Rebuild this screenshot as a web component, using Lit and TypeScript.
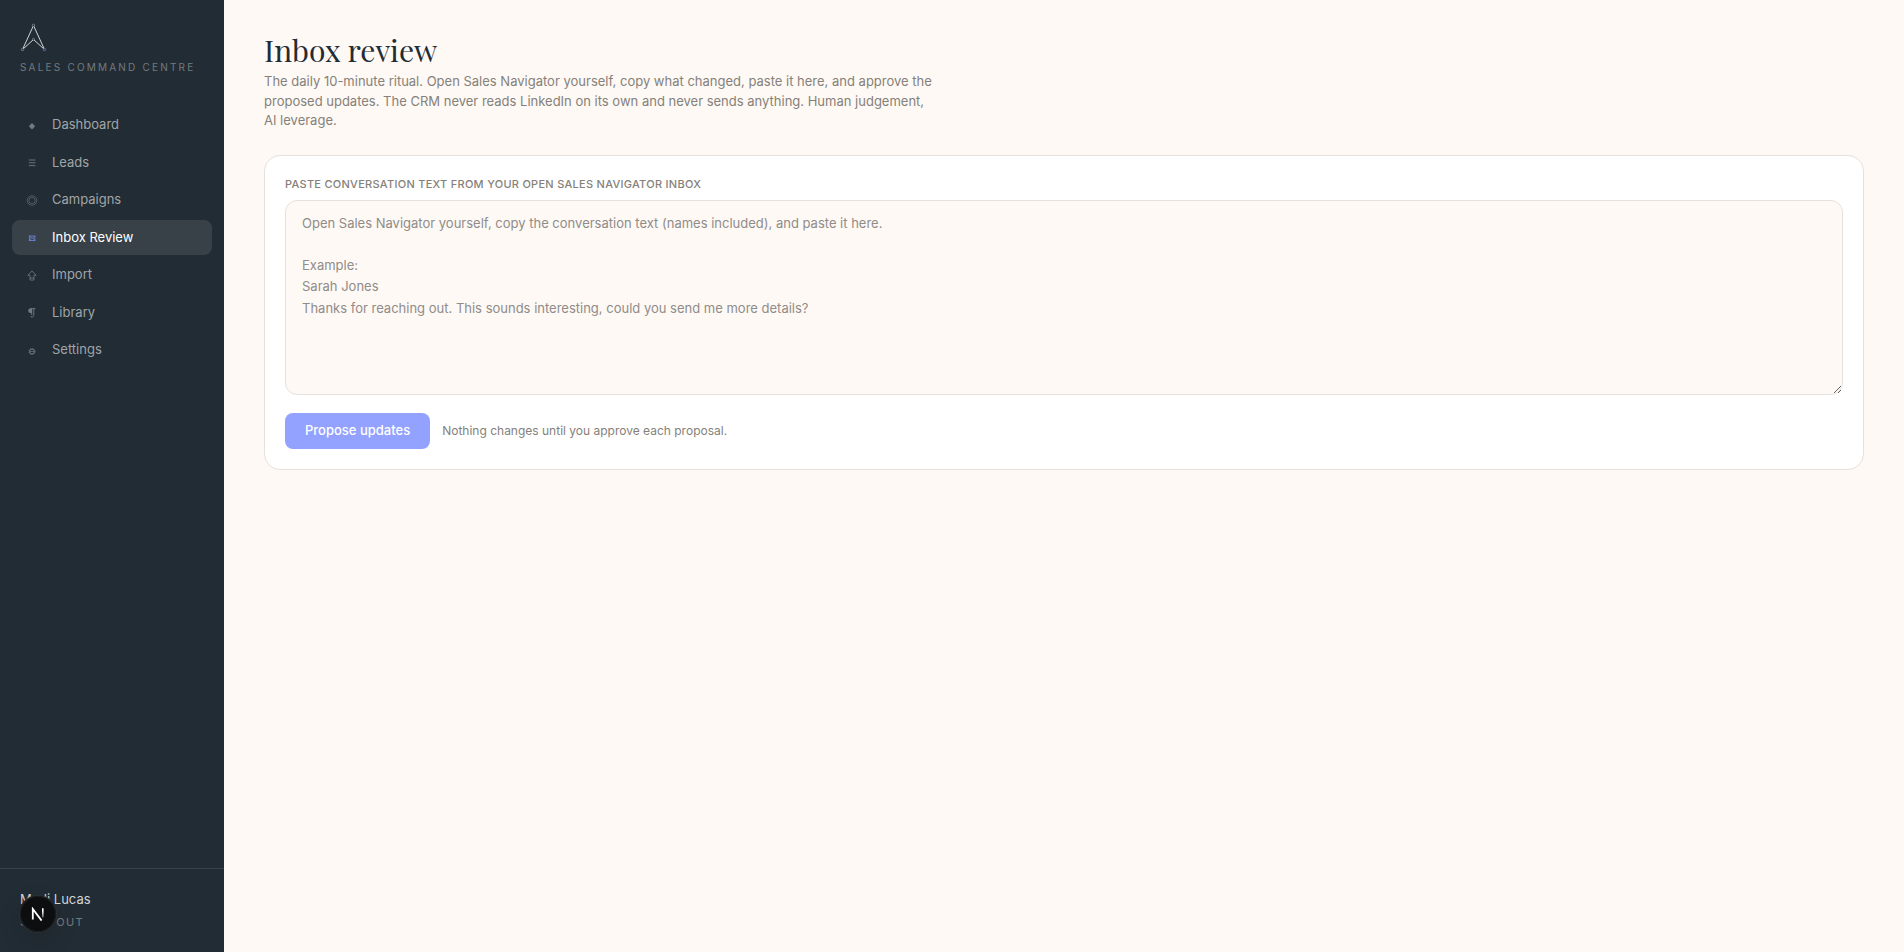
import { LitElement, html, css, svg } from "lit";
import { customElement, state } from "lit/decorators.js";
import { classMap } from "lit/directives/class-map.js";

const icons = {
  dashboard: svg`<path d="M8 6 11.2 9.2 8 12.4 4.8 9.2Z" fill="currentColor"/>`,
  leads: svg`<path d="M4.8 6h6.6M4.8 8.8h6.6M4.8 11.6h6.6" stroke="currentColor" stroke-width=".9"/>`,
  campaigns: svg`<circle cx="8" cy="8.5" r="4.8" stroke="currentColor" stroke-width=".6" fill="none"/><circle cx="8" cy="8.5" r="3.1" stroke="currentColor" stroke-width=".6" fill="none"/>`,
  inbox: svg`<rect x="5.3" y="7" width="5.6" height="4.6" stroke="currentColor" stroke-width=".8" fill="none"/><path d="m5.3 7 2.8 2.4L10.9 7M5.3 11.6l2-2.4M10.9 11.6l-2-2.4" stroke="currentColor" stroke-width=".8" fill="none"/>`,
  import: svg`<path d="M8 4 12.2 8.3H10V13H6V8.3H3.8ZM6 11h4" stroke="currentColor" stroke-width=".8" fill="none"/>`,
  library: svg`<path d="M8 4.3H6.6a2.2 2.2 0 0 0 0 4.8H8Z" fill="currentColor"/><path d="M7 4.6h4.5M7.7 4.5V11M9.8 4.5v6.6c0 1.3-.7 2-1.8 2-.8 0-1.3-.3-1.6-.9" stroke="currentColor" stroke-width=".9" fill="none"/>`,
  settings: svg`<circle cx="8" cy="9.5" r="2.5" stroke="currentColor" fill="none"/><circle cx="8" cy="9.5" r="3.1" stroke="currentColor" stroke-width=".7" stroke-dasharray="1 1" fill="none"/><path d="M6 9.5h4" stroke="currentColor" stroke-width=".7"/>`,
};

const items: { label: string; icon: keyof typeof icons }[] = [
  { label: "Dashboard", icon: "dashboard" },
  { label: "Leads", icon: "leads" },
  { label: "Campaigns", icon: "campaigns" },
  { label: "Inbox Review", icon: "inbox" },
  { label: "Import", icon: "import" },
  { label: "Library", icon: "library" },
  { label: "Settings", icon: "settings" },
];

@customElement("app-sidebar")
class AppSidebar extends LitElement {
  static styles = css`
    :host { display: flex; flex-direction: column; background: #222c34; color: #fff; }
    .brand { padding: 20px 20px 0; }
    .logo { display: block; width: 28px; height: 36px; }
    .tagline { margin: 4px 0 0; font-size: 10px; line-height: 15px; letter-spacing: 0.22em; color: #747a7f; white-space: nowrap; }
    .nav { display: flex; flex-direction: column; gap: 2px; padding: 32px 12px 0; }
    .item { display: flex; align-items: center; gap: 12px; padding: 8px 12px; border-radius: 8px; line-height: 1.5; color: #a0a5a8; text-decoration: none; }
    .item.active { background: #384147; color: #fff; }
    .icon { width: 16px; height: 16px; flex: none; color: #737a7f; }
    .active .icon { color: #7086e4; }
    .footer { margin-top: auto; padding: 20px; border-top: 1px solid #38424a; }
    .user { margin: 0; line-height: 20px; color: #d3d5d6; }
    .signout { display: block; margin-top: 4px; padding: 0; border: 0; background: none; font: inherit; font-size: 11px; line-height: 19px; letter-spacing: 0.12em; text-transform: uppercase; color: #747a7f; }
  `;
  render() {
    return html`
      <div class="brand">
        <svg class="logo" viewBox="0 0 28 36" fill="none" aria-hidden="true">
          <path d="M13.5 5.5 2.5 29.5 13.5 19.5 24.5 29.5Z" stroke="#e4e6e8" stroke-width=".9" />
          <g stroke="#8790a0" stroke-width=".8" fill="#222c34">
            <circle cx="13.5" cy="5.3" r="1.2" /><circle cx="13.5" cy="19.3" r="1" />
            <circle cx="2.5" cy="29.5" r="1.2" /><circle cx="24.5" cy="29.5" r="1.2" stroke="#6f7fc4" />
          </g>
        </svg>
        <p class="tagline">SALES COMMAND CENTRE</p>
      </div>
      <nav class="nav">
        ${items.map((i) => {
          const active = i.icon === "inbox";
          return html`<a href="#${i.icon}" class=${classMap({ item: true, active })}>
            <svg class="icon" viewBox="0 0 16 16" aria-hidden="true">${icons[i.icon]}</svg>${i.label}</a>`;
        })}
      </nav>
      <div class="footer">
        <p class="user">Madi Lucas</p>
        <button class="signout" type="button">Sign out</button>
      </div>
    `;
  }
}

@customElement("app-root")
class AppRoot extends LitElement {
  @state() private text = "";

  static styles = css`
    :host { display: grid; grid-template-columns: 224px 1fr; min-height: 100vh; font-family: Inter, sans-serif; font-size: 13px; line-height: 1.5; background: #fef9f5; color: #222c34; }
    .main { padding: 32px 40px; min-width: 0; }
    .title { margin: 0 0 4px; font-family: "Playfair Display", "Liberation Serif", serif; font-size: 30px; line-height: 36px; font-weight: 400; color: #222c34; }
    .intro { margin: 0 0 24px; max-width: 672px; color: #85817a; }
    .card { padding: 20px; border: 1px solid #e6e1dc; border-radius: 16px; background: #fff; }
    .label { display: block; margin-bottom: 8px; font-size: 11px; font-weight: 500; letter-spacing: 0.025em; text-transform: uppercase; color: #85817a; }
    .paste { display: block; box-sizing: border-box; width: 100%; padding: 12px 16px; border: 1px solid #e6e1dc; border-radius: 12px; background: #fef9f5; font: inherit; line-height: 1.625; color: #222c34; resize: vertical; outline: none; }
    .paste::placeholder { color: #8f8c89; }
    .actions { display: flex; align-items: center; gap: 12px; margin-top: 18px; }
    .propose { padding: 8px 20px; border: 0; border-radius: 8px; background: #93a2ff; font: inherit; font-weight: 500; color: #fff; }
    .note { font-size: 12px; color: #85817a; }
    .dev { position: fixed; left: 20px; bottom: 20px; display: grid; place-items: center; width: 36px; height: 36px; padding: 0; border: 0; border-radius: 50%; background: #0c0e10; box-shadow: 0 0 0 1px #2c3033, inset 0 0 0 1px #1c1f21, 0 8px 24px #0002; }
    .mark { width: 14px; height: 14px; }
  `;

  render() {
    return html`
      <app-sidebar></app-sidebar>
      <main class="main">
        <h1 class="title">Inbox review</h1>
        <p class="intro">The daily 10-minute ritual. Open Sales Navigator yourself, copy what changed, paste it here, and approve the proposed updates. The CRM never reads LinkedIn on its own and never sends anything. Human judgement, AI leverage.</p>
        <section class="card">
          <label class="label" for="paste">Paste conversation text from your open Sales Navigator inbox</label>
          <textarea id="paste" class="paste" rows="8" .value=${this.text}
            @input=${(e: Event) => (this.text = (e.target as HTMLTextAreaElement).value)}
            placeholder=${"Open Sales Navigator yourself, copy the conversation text (names included), and paste it here.\n\nExample:\nSarah Jones\nThanks for reaching out. This sounds interesting, could you send me more details?"}></textarea>
          <div class="actions">
            <button class="propose" type="button" ?disabled=${!this.text}>Propose updates</button>
            <span class="note">Nothing changes until you approve each proposal.</span>
          </div>
        </section>
      </main>
      <button class="dev" type="button" aria-label="Open developer tools">
        <svg class="mark" viewBox="0 0 14 14" fill="none" aria-hidden="true">
          <defs><linearGradient id="fade" x1="0" y1="0" x2="0" y2="14" gradientUnits="userSpaceOnUse"><stop offset=".3" stop-color="#fff" /><stop offset="1" stop-color="#fff" stop-opacity="0" /></linearGradient></defs>
          <path d="M1.8 12.6V2L10.6 13.6" stroke="#fff" stroke-width="1.8" />
          <path d="M11.8 1.2V10.6" stroke="url(#fade)" stroke-width="1.6" />
        </svg>
      </button>
    `;
  }
}
